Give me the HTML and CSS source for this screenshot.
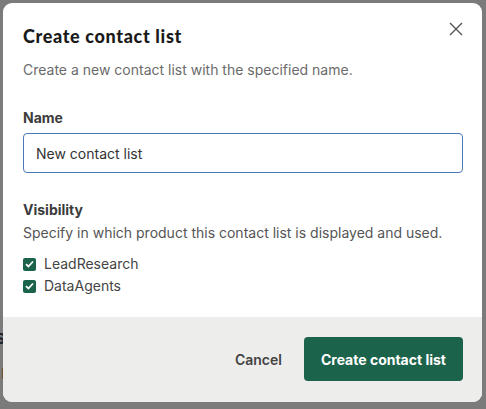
FILE: index.html
```html
<!DOCTYPE html>
<html lang="en">
<head>
<meta charset="utf-8">
<title>Create contact list</title>
<link rel="stylesheet" href="styles.css">
</head>
<body>
<div class="backdrop">
  <div class="behind">
    <span class="behind-a">s</span>
    <span class="behind-b">I</span>
  </div>
  <div class="modal" role="dialog" aria-labelledby="dlg-title">
    <div class="modal-body">
      <div class="modal-head">
        <h2 id="dlg-title" class="title">Create contact list</h2>
        <button class="close" aria-label="Close">
          <svg width="14" height="14" viewBox="0 0 14 14"><path d="M1 1L13 13M13 1L1 13" stroke="#555" stroke-width="1.4" fill="none"/></svg>
        </button>
      </div>
      <p class="desc">Create a new contact list with the specified name.</p>

      <label class="field-label" for="name">Name</label>
      <input id="name" class="text-input" type="text" value="New contact list">

      <div class="field-label vis">Visibility</div>
      <p class="hint">Specify in which product this contact list is displayed and used.</p>
      <div class="checks">
        <label class="check"><span class="box"><svg width="9" height="8" viewBox="0 0 9 8"><path d="M1 4.2L3.4 6.5L8 1.5" stroke="#fff" stroke-width="1.8" fill="none"/></svg></span>LeadResearch</label>
        <label class="check"><span class="box"><svg width="9" height="8" viewBox="0 0 9 8"><path d="M1 4.2L3.4 6.5L8 1.5" stroke="#fff" stroke-width="1.8" fill="none"/></svg></span>DataAgents</label>
      </div>
    </div>
    <div class="modal-foot">
      <button class="btn-cancel">Cancel</button>
      <button class="btn-primary">Create contact list</button>
    </div>
  </div>
</div>
</body>
</html>
```

FILE: styles.css
```css
* { box-sizing: border-box; }
html, body { margin: 0; padding: 0; }
body {
  width: 486px;
  height: 409px;
  overflow: hidden;
  background: #7b7b7b;
  font-family: Inter, "Noto Sans", sans-serif;
}
.backdrop {
  position: relative;
  height: 409px;
  padding: 3px 4px 7px 3px;
}
/* page content peeking out from under the dialog */
.behind {
  position: absolute;
  left: -5px;
  top: 325px;
  color: #1c2530;
  font-weight: 700;
}
.behind-a { position: absolute; top: 0; font-size: 20px; }
.behind-b { position: absolute; top: 40px; font-size: 14px; color: #5a4a30; font-weight: 400; left: 6px; }
.modal {
  position: relative;
  height: 399px;
  background: #fff;
  border-radius: 9px;
  overflow: hidden;
  display: flex;
  flex-direction: column;
}
.modal-body {
  flex: 1;
  padding: 22px 19px 0 20px;
}
.modal-head {
  display: flex;
  justify-content: space-between;
  align-items: flex-start;
}
.title {
  margin: 0;
  font-family: Lato, Inter, sans-serif;
  font-weight: 900;
  font-size: 18px;
  line-height: 22px;
  color: #1a1a1a;
  letter-spacing: 0.65px;
}
.close {
  border: 0;
  background: none;
  padding: 0;
  margin: -5px -2px 0 0;
  width: 18px;
  height: 18px;
  display: flex;
  align-items: center;
  justify-content: center;
}
.desc {
  margin: 14px 0 0;
  font-size: 14px;
  line-height: 18px;
  color: #6b6b6b;
}
.field-label {
  display: block;
  margin-top: 30px;
  font-size: 14px;
  font-weight: 700;
  line-height: 18px;
  color: #3c3c3c;
}
.text-input {
  display: block;
  width: 440px;
  height: 40px;
  margin-top: 6px;
  padding: 0 12px;
  border: 1px solid #4a78b8;
  border-radius: 4px;
  font-family: inherit;
  font-size: 14px;
  color: #333;
  outline: none;
}
.field-label.vis { margin-top: 28px; }
.hint {
  margin: 5px 0 0;
  font-size: 14px;
  line-height: 18px;
  color: #555;
}
.checks {
  margin-top: 13px;
  display: flex;
  flex-direction: column;
  gap: 4px;
}
.check {
  display: flex;
  align-items: center;
  gap: 8px;
  font-size: 14px;
  line-height: 18px;
  color: #444;
}
.box {
  width: 13px;
  height: 13px;
  border-radius: 2px;
  background: #1b634b;
  display: flex;
  align-items: center;
  justify-content: center;
}
.modal-foot {
  height: 85px;
  background: #ededec;
  display: flex;
  justify-content: flex-end;
  align-items: center;
  gap: 22px;
  padding: 0 19px 1px 0;
}
.btn-cancel {
  border: 0;
  background: none;
  font-family: inherit;
  font-size: 14px;
  font-weight: 600;
  color: #444;
  padding: 0;
}
.btn-primary {
  border: 0;
  background: #1b634b;
  color: #fff;
  font-family: inherit;
  font-size: 14px;
  font-weight: 700;
  height: 44px;
  padding: 0 17px;
  border-radius: 4px;
}
```
